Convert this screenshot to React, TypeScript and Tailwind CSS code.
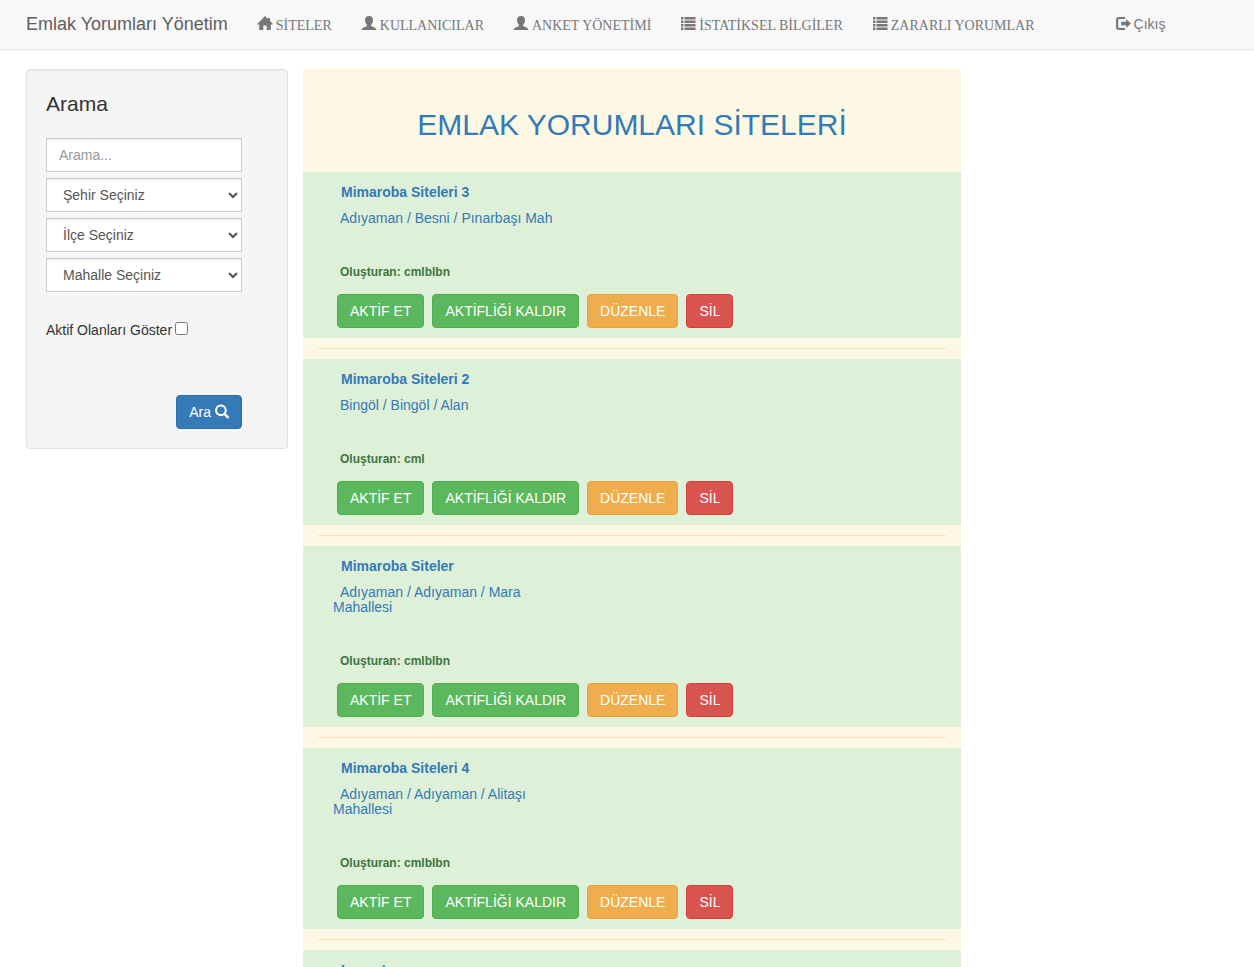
import type { ReactNode } from "react";

type Site = { name: string; place: string; creator: string };

const sites: Site[] = [
  { name: "Mimaroba Siteleri 3", place: "Adıyaman / Besni / Pınarbaşı Mah", creator: "cmlblbn" },
  { name: "Mimaroba Siteleri 2", place: "Bingöl / Bingöl / Alan", creator: "cml" },
  { name: "Mimaroba Siteler", place: "Adıyaman / Adıyaman / Mara Mahallesi", creator: "cmlblbn" },
  { name: "Mimaroba Siteleri 4", place: "Adıyaman / Adıyaman / Alitaşı Mahallesi", creator: "cmlblbn" },
  { name: "Levent", place: "İstanbul / Beşiktaş / Levent", creator: "cml" },
];

function Glyph({ children }: { children: ReactNode }) {
  return (
    <svg
      aria-hidden="true"
      viewBox="0 0 14 14"
      className="inline-block size-[14px] shrink-0 overflow-visible"
      fill="currentColor"
    >
      {children}
    </svg>
  );
}

const HomeIcon = () => (
  <Glyph>
    <path d="M7 -1 L10 2 V1 H12 V4 L14.8 7 Q14.8 7.5 14.2 7.5 H12.8 V12.4 Q12.8 13 12.2 13 H8.7 V8.5 H5.3 V13 H1.8 Q1.2 13 1.2 12.4 V7.5 H-.2 Q-.8 7.5 -.8 7 Z" />
  </Glyph>
);

const UserIcon = () => (
  <Glyph>
    <path d="M7 -1 C9.6 -1 11 .6 11 3.1 C11 5.2 10.1 6.7 9.2 7.7 C8.8 8.3 9 9 9.6 9.3 L12.8 10.8 C13.8 11.3 14.3 11.9 14.3 13 H-.3 C-.3 11.9 .2 11.3 1.2 10.8 L4.4 9.3 C5 9 5.2 8.3 4.8 7.7 C3.9 6.7 3 5.2 3 3.1 C3 .6 4.4 -1 7 -1Z" />
  </Glyph>
);

const ListIcon = () => (
  <Glyph>
    <path d="M0 0h2.4v2.4H0z M3.5 0h11v2.4h-11z M0 3.5h2.4v2.4H0z M3.5 3.5h11v2.4h-11z M0 7h2.4v2.4H0z M3.5 7h11v2.4h-11z M0 10.5h2.4v2.4H0z M3.5 10.5h11v2.4h-11z" />
  </Glyph>
);

const LogoutIcon = () => (
  <Glyph>
    <path d="M9 0 H3 Q0 0 0 3 V10 Q0 13 3 13 H9 V11 H3.4 Q2.2 11 2.2 9.8 V3.2 Q2.2 2 3.4 2 H9Z" />
    <path d="M10.2 2.3 L15 6.5 L10.2 10.7 V8.2 H5.2 V4.8 H10.2Z" />
  </Glyph>
);

const SearchIcon = () => (
  <Glyph>
    <path
      fillRule="evenodd"
      d="M5.9 -.6 a5.9 5.9 0 0 1 4.9 9.1 L14 11.6 Q14.4 12 14 12.5 L13.1 13.4 Q12.6 13.8 12.2 13.4 L9 10.3 A5.9 5.9 0 1 1 5.9 -.6Z M5.9 1.5 a3.8 3.8 0 1 0 0 7.6 a3.8 3.8 0 0 0 0 -7.6Z"
    />
  </Glyph>
);

const links = [
  { label: "SİTELER", icon: <HomeIcon /> },
  { label: "KULLANICILAR", icon: <UserIcon /> },
  { label: "ANKET YÖNETİMİ", icon: <UserIcon /> },
  { label: "İSTATİKSEL BİLGİLER", icon: <ListIcon /> },
  { label: "ZARARLI YORUMLAR", icon: <ListIcon /> },
];

function Navbar() {
  return (
    <nav className="flex min-h-[50px] items-center border-b border-[#e7e7e7] bg-[#f8f8f8] pb-[2px] pl-[26px] text-[#777]">
      <a href="#" className="mr-[15px] text-lg leading-5 text-[#5e5e5e]">
        Emlak Yorumları Yönetim
      </a>
      <ul className="flex items-center">
        {links.map((l) => (
          <li key={l.label}>
            <a
              href="#"
              className="flex items-center gap-1 px-[15px] font-['Liberation_Serif',serif] text-sm leading-5"
            >
              {l.icon}
              <span className="pt-1">{l.label}</span>
            </a>
          </li>
        ))}
      </ul>
      <a href="#" className="ml-[66px] flex items-center gap-1 leading-5">
        <LogoutIcon />
        Çıkış
      </a>
    </nav>
  );
}

const field =
  "block h-[34px] w-full border border-[#ccc] bg-white px-3 text-sm text-[#555] shadow-[inset_0_1px_1px_rgba(0,0,0,0.075)]";

function SearchPanel() {
  return (
    <aside className="w-[262px] shrink-0 rounded border border-[#e3e3e3] bg-[#f5f5f5] pt-[19px] pr-[45px] pb-[19px] pl-[19px] shadow-[inset_0_1px_1px_rgba(0,0,0,0.05)]">
      <form onSubmit={(e) => e.preventDefault()}>
        <h2 className="mb-[19px] text-[21px] leading-[30px]">Arama</h2>
        <div className="flex flex-col gap-1.5">
          <input type="text" aria-label="Arama" placeholder="Arama..." className={field + " placeholder:text-[#999]"} />
          {["Şehir Seçiniz", "İlçe Seçiniz", "Mahalle Seçiniz"].map((s) => (
            <select key={s} aria-label={s} className={field}>
              <option>{s}</option>
            </select>
          ))}
        </div>
        <label className="mt-7 flex items-center gap-[3px] leading-5">
          Aktif Olanları Göster
          <input type="checkbox" className="mb-[3px] size-[13px]" />
        </label>
        <div className="mt-[55px] flex justify-end">
          <button
            type="submit"
            className="flex h-[34px] items-center gap-1 rounded border border-[#2e6da4] bg-[#337ab7] px-3 text-white"
          >
            Ara <SearchIcon />
          </button>
        </div>
      </form>
    </aside>
  );
}

const button = "h-[34px] rounded border px-3 text-sm text-white";

function SiteCard({ site }: { site: Site }) {
  return (
    <article className="bg-[#dff0d8] px-[30px] pt-[10px] pb-[10px] text-[#3c763d]">
      <a href="#" className="block pl-2 leading-5 font-bold text-[#337ab7]">
        {site.name}
      </a>
      <a href="#" className="mt-[9px] block w-[224px] indent-[7px] leading-[15px] text-[#337ab7]">
        {site.place}
      </a>
      <p className="mt-9 pl-[7px] text-xs leading-5 font-bold">Oluşturan: {site.creator}</p>
      <div className="mt-3 flex gap-2 pl-1">
        <button className={button + " border-[#4cae4c] bg-[#5cb85c]"}>AKTİF ET</button>
        <button className={button + " border-[#4cae4c] bg-[#5cb85c]"}>AKTİFLİĞİ KALDIR</button>
        <button className={button + " border-[#eea236] bg-[#f0ad4e]"}>DÜZENLE</button>
        <button className={button + " border-[#d43f3a] bg-[#d9534f]"}>SİL</button>
      </div>
    </article>
  );
}

export default function App() {
  return (
    <div className="min-h-screen bg-white font-['Liberation_Sans',Arial,sans-serif] text-sm text-[#333]">
      <Navbar />
      <div className="flex items-start gap-[15px] pt-[19px] pr-[293px] pl-[26px]">
        <SearchPanel />
        <main className="min-w-0 flex-1 bg-[#fcf8e3]">
          <h1 className="pt-9 pb-[27px] text-center text-[30px] leading-10 text-[#337ab7]">
            EMLAK YORUMLARI SİTELERİ
          </h1>
          {sites.map((s) => (
            <div key={s.name}>
              <SiteCard site={s} />
              <hr className="mx-[15px] my-[10px] border-[#f7e1b5]" />
            </div>
          ))}
        </main>
      </div>
    </div>
  );
}
